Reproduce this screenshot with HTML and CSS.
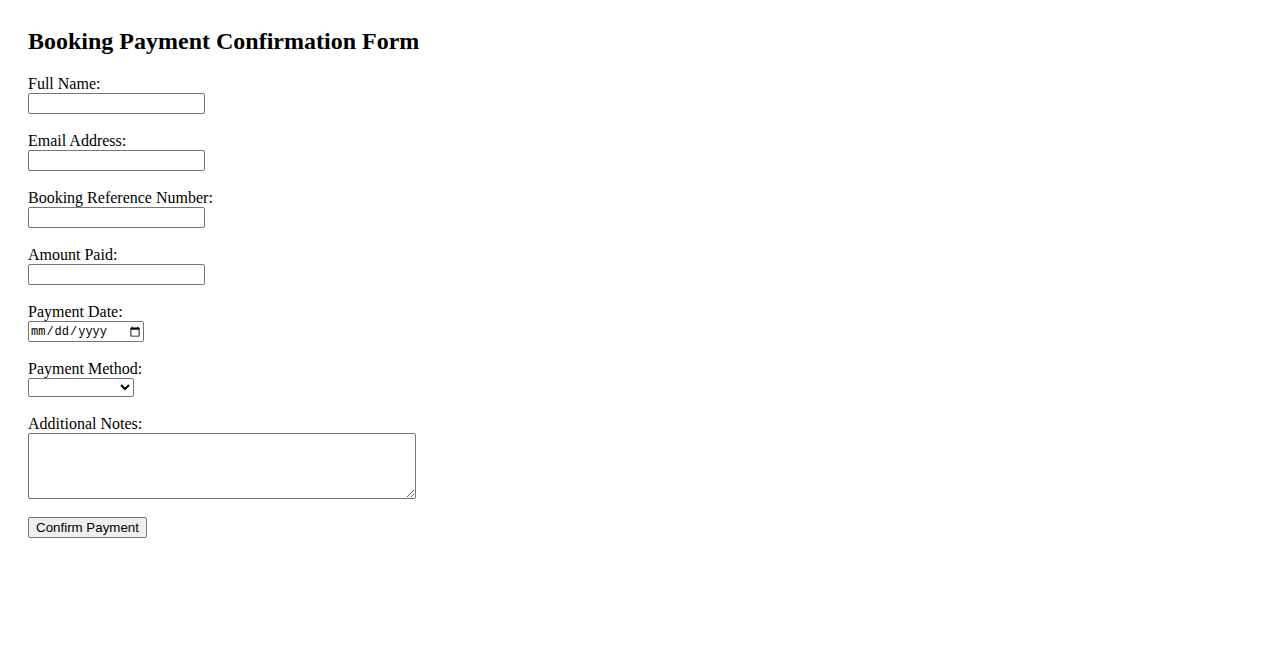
FILE: index.html
```html
<!DOCTYPE html>
<html lang="en">
<head>
    <meta charset="UTF-8">
    <meta name="viewport" content="width=device-width, initial-scale=1.0">
    <title>Booking Payment Confirmation Form</title>
    <link rel="stylesheet" href="styles.css">
</head>
<body>
    <div class="container">
        <h2>Booking Payment Confirmation Form</h2>
        <form id="paymentForm">
            <label for="fullName">Full Name:</label><br>
            <input type="text" id="fullName" name="fullName" class="field"><br><br>

            <label for="email">Email Address:</label><br>
            <input type="email" id="email" name="email" class="field"><br><br>

            <label for="bookingRef">Booking Reference Number:</label><br>
            <input type="text" id="bookingRef" name="bookingRef" class="field"><br><br>

            <label for="amount">Amount Paid:</label><br>
            <input type="text" id="amount" name="amount" class="field"><br><br>

            <label for="paymentDate">Payment Date:</label><br>
            <input type="date" id="paymentDate" name="paymentDate" class="date-field"><br><br>

            <label for="paymentMethod">Payment Method:</label><br>
            <select id="paymentMethod" name="paymentMethod" class="select-field">
                <option value=""></option>
                <option value="card">Credit Card</option>
                <option value="paypal">PayPal</option>
                <option value="bank">Bank Transfer</option>
            </select><br><br>

            <label for="notes">Additional Notes:</label><br>
            <textarea id="notes" name="notes" rows="4" cols="50" class="notes"></textarea><br><br>

            <button type="submit" class="submit-button">Confirm Payment</button>
        </form>
    </div>
</body>
</html>
```

FILE: styles.css
```css
body {
    margin: 8px;
    font-family: "Liberation Serif", "Times New Roman", serif;
    font-size: 16px;
    color: #000;
    background-color: #fff;
}
.container {
    padding: 20px;
}
h2 {
    margin-top: 0;
    margin-bottom: 20px;
    font-size: 24px;
}
input, select, textarea, button {
    vertical-align: top;
}
input, select, button {
    font-family: "Liberation Sans", Arial, sans-serif;
    font-size: 13.33px;
}
.field {
    box-sizing: border-box;
    width: 177px;
    height: 21px;
    border: 1px solid #767676;
    border-radius: 2px;
}
.date-field {
    box-sizing: border-box;
    width: 116px;
    height: 21px;
    border: 1px solid #767676;
    border-radius: 2px;
    font-family: "Liberation Mono", monospace;
    font-size: 12px;
}
.select-field {
    box-sizing: border-box;
    width: 106px;
    height: 19px;
    border: 1px solid #767676;
    border-radius: 2px;
    background-color: #fff;
}
.notes {
    box-sizing: border-box;
    width: 388px;
    height: 66px;
    border: 1px solid #767676;
    border-radius: 2px;
    font-family: "Liberation Mono", monospace;
}
.submit-button {
    box-sizing: border-box;
    width: 119px;
    height: 21px;
    padding: 1px 4px;
    border: 1px solid #767676;
    border-radius: 2px;
    background-color: #efefef;
    color: #000;
    white-space: nowrap;
}
```
